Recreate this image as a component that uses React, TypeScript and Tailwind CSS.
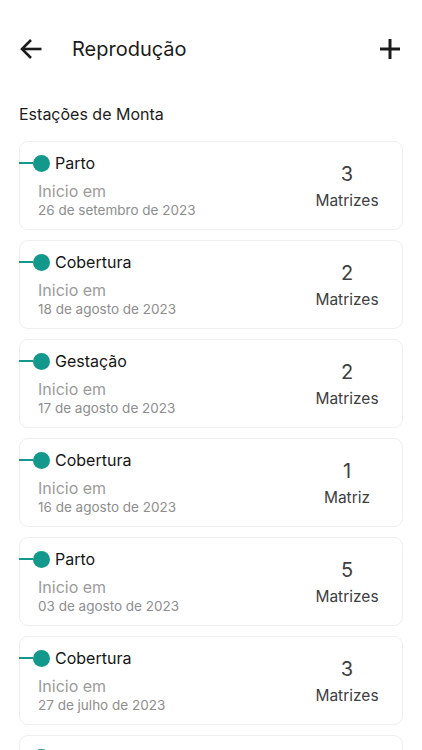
import React from "react";

type Item = { title: string; date: string; count: number };

const items: Item[] = [
  { title: "Parto", date: "26 de setembro de 2023", count: 3 },
  { title: "Cobertura", date: "18 de agosto de 2023", count: 2 },
  { title: "Gestação", date: "17 de agosto de 2023", count: 2 },
  { title: "Cobertura", date: "16 de agosto de 2023", count: 1 },
  { title: "Parto", date: "03 de agosto de 2023", count: 5 },
  { title: "Cobertura", date: "27 de julho de 2023", count: 3 },
  { title: "Parto", date: "20 de julho de 2023", count: 4 },
];

function Card({ item }: { item: Item }) {
  return (
    <div className="flex items-center rounded-[9px] border border-[#efefef] bg-white pl-[18px] pr-[15px] pt-[11px] pb-[10px]">
      <div className="flex flex-1 flex-col">
        <div className="-ml-[19px] flex h-5 items-center">
          <div className="h-[2px] w-[14px] bg-[#13998b]" />
          <div className="h-[17px] w-[17px] rounded-full bg-[#13998b]" />
          <span className="ml-[5px] text-[16px] leading-5 text-[#161616]">{item.title}</span>
        </div>
        <span className="mt-2 text-[16px] leading-5 text-[#9b9b9b]">Inicio em</span>
        <span className="text-[13.5px] leading-[18px] text-[#8e8e8e]">{item.date}</span>
      </div>
      <div className="flex w-[80px] flex-col items-center text-[#404040]">
        <span className="text-[20px] leading-7">{item.count}</span>
        <span className="mt-[1px] text-[15.5px] leading-6">{item.count === 1 ? "Matriz" : "Matrizes"}</span>
      </div>
    </div>
  );
}

export default function App() {
  return (
    <div className="min-h-screen bg-white" style={{ fontFamily: "Inter, 'Noto Sans', sans-serif" }}>
      <header className="flex h-[98px] items-center pl-5 pr-[21px]">
        <svg width="22" height="22" viewBox="0 0 22 22" fill="none" stroke="#1c1c1c" strokeWidth="2.6">
          <path d="M21.5 11H2.5" />
          <path d="M11 2L2 11L11 20" strokeLinejoin="miter" />
        </svg>
        <h1 className="ml-[30px] flex-1 text-[20px] leading-7 text-[#1c1c1c]">Reprodução</h1>
        <svg width="22" height="22" viewBox="0 0 22 22" fill="none" stroke="#1c1c1c" strokeWidth="3">
          <path d="M11 1V21" />
          <path d="M1 11H21" />
        </svg>
      </header>
      <div className="px-[19px]">
        <h2 className="mb-[15px] mt-1 text-[16px] leading-6 text-[#1c1c1c]">Estações de Monta</h2>
        <div className="flex flex-col gap-[10px] pb-6">
          {items.map((it, i) => (
            <Card key={i} item={it} />
          ))}
        </div>
      </div>
    </div>
  );
}
